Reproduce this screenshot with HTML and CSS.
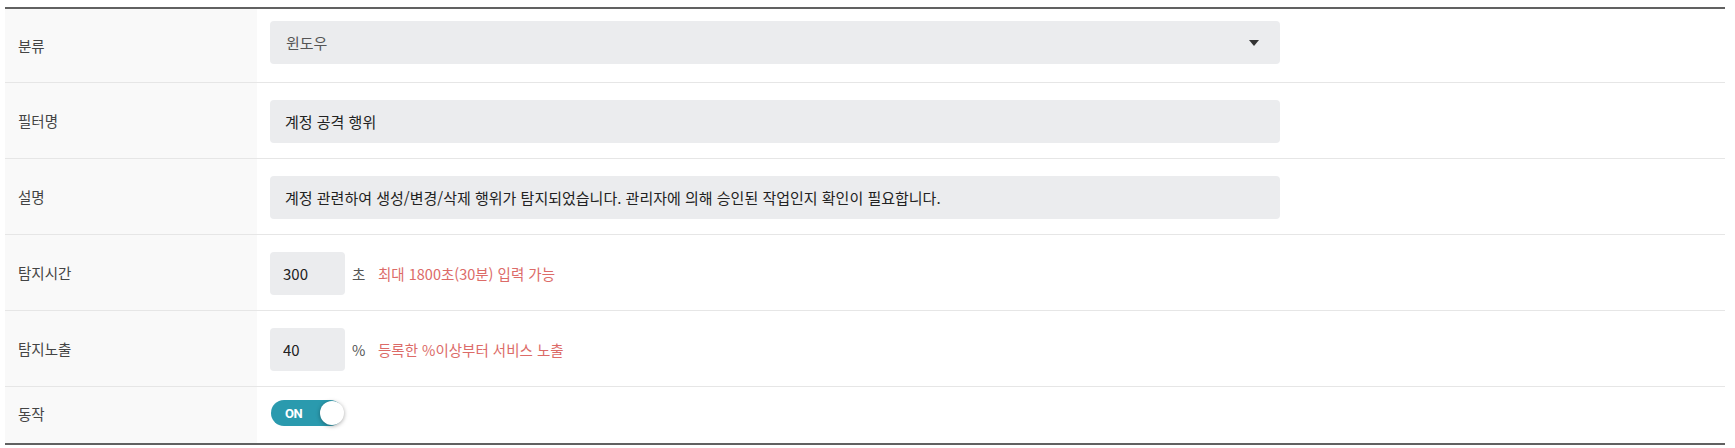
FILE: index.html
```html
<!DOCTYPE html>
<html lang="ko">
<head>
  <meta charset="UTF-8" />
  <meta name="viewport" content="width=device-width, initial-scale=1.0" />
  <title>필터 설정</title>
  <link rel="stylesheet" href="styles.css">
</head>
<body>
  <div class="wrap">
    <table class="form-table">
      <tbody>
        <tr class="row-select">
          <th>분류</th>
          <td>
            <div class="select-box">
              <select class="field field-wide field-select">
                <option>윈도우</option>
                <option>리눅스</option>
              </select>
            </div>
          </td>
        </tr>
        <tr>
          <th>필터명</th>
          <td><input type="text" class="field field-wide" value="계정 공격 행위"></td>
        </tr>
        <tr>
          <th>설명</th>
          <td><input type="text" class="field field-wide" value="계정 관련하여 생성/변경/삭제 행위가 탐지되었습니다. 관리자에 의해 승인된 작업인지 확인이 필요합니다."></td>
        </tr>
        <tr>
          <th>탐지시간</th>
          <td>
            <div class="inline-field">
              <input type="text" class="field field-num" value="300">
              <span class="unit">초</span>
              <span class="hint">최대 1800초(30분) 입력 가능</span>
            </div>
          </td>
        </tr>
        <tr>
          <th>탐지노출</th>
          <td>
            <div class="inline-field">
              <input type="text" class="field field-num" value="40">
              <span class="unit">%</span>
              <span class="hint">등록한 %이상부터 서비스 노출</span>
            </div>
          </td>
        </tr>
        <tr class="row-toggle">
          <th>동작</th>
          <td>
            <label class="toggle">
              <span class="toggle-text">ON</span>
              <span class="toggle-knob"></span>
            </label>
          </td>
        </tr>
      </tbody>
    </table>
  </div>
</body>
</html>
```

FILE: styles.css
```css
* { box-sizing: border-box; }

body {
  margin: 0;
  font-family: "Noto Sans CJK KR", "Noto Sans", sans-serif;
  background: #ffffff;
  color: #333333;
}

.wrap {
  padding: 7px 10px 0 5px;
}

.form-table {
  width: 1720px;
  border-collapse: collapse;
  border-top: 2px solid #616161;
  border-bottom: 2px solid #616161;
}

.form-table tr {
  border-bottom: 1px solid #e6e6e6;
}

.form-table tr:last-child {
  border-bottom: none;
}

.form-table th {
  width: 252px;
  padding: 0 13px;
  background: #f9f9f9;
  text-align: left;
  font-size: 14.5px;
  font-weight: 400;
  color: #444444;
  vertical-align: middle;
}

.form-table td {
  height: 75px;
  padding: 17px 13px 15px;
  vertical-align: top;
  font-size: 14.5px;
}

.row-select td {
  height: 73px;
  padding-top: 12px;
  padding-bottom: 18px;
}

.row-toggle td {
  height: 56px;
  padding-top: 13px;
  padding-bottom: 17px;
}

.row-toggle th {
  padding-bottom: 4px;
}

.field {
  height: 43px;
  padding: 0 15px;
  border: none;
  border-radius: 4px;
  background: #ebecee;
  font-family: inherit;
  font-size: 15px;
  color: #222222;
  vertical-align: middle;
}

.field:focus {
  outline: none;
}

.field-wide {
  width: 1010px;
}

.field-num {
  width: 75px;
  padding: 0 13px;
}

.select-box {
  position: relative;
  display: inline-block;
}

.field-select {
  appearance: none;
  -webkit-appearance: none;
  color: #555555;
  padding-left: 16px;
}

.select-box::after {
  content: "";
  position: absolute;
  right: 21px;
  top: 19px;
  border-left: 5px solid transparent;
  border-right: 5px solid transparent;
  border-top: 6px solid #333333;
  pointer-events: none;
}

.inline-field {
  display: flex;
  align-items: center;
}

.unit {
  width: 19px;
  margin: 0 7px;
  color: #555555;
}

.hint {
  color: #dc6b68;
}

.toggle {
  position: relative;
  display: flex;
  align-items: center;
  width: 72px;
  height: 26px;
  margin-left: 1px;
  padding-left: 14px;
  border-radius: 13px;
  background: #2a9aae;
  cursor: pointer;
}

.toggle-text {
  font-family: Roboto, "Noto Sans", sans-serif;
  font-size: 13px;
  font-weight: 700;
  color: #ffffff;
  letter-spacing: -0.5px;
}

.toggle-knob {
  position: absolute;
  right: -1px;
  top: 1px;
  width: 24px;
  height: 24px;
  border-radius: 50%;
  background: #ffffff;
  box-shadow: 0 1px 4px rgba(0, 0, 0, 0.35);
}
```
